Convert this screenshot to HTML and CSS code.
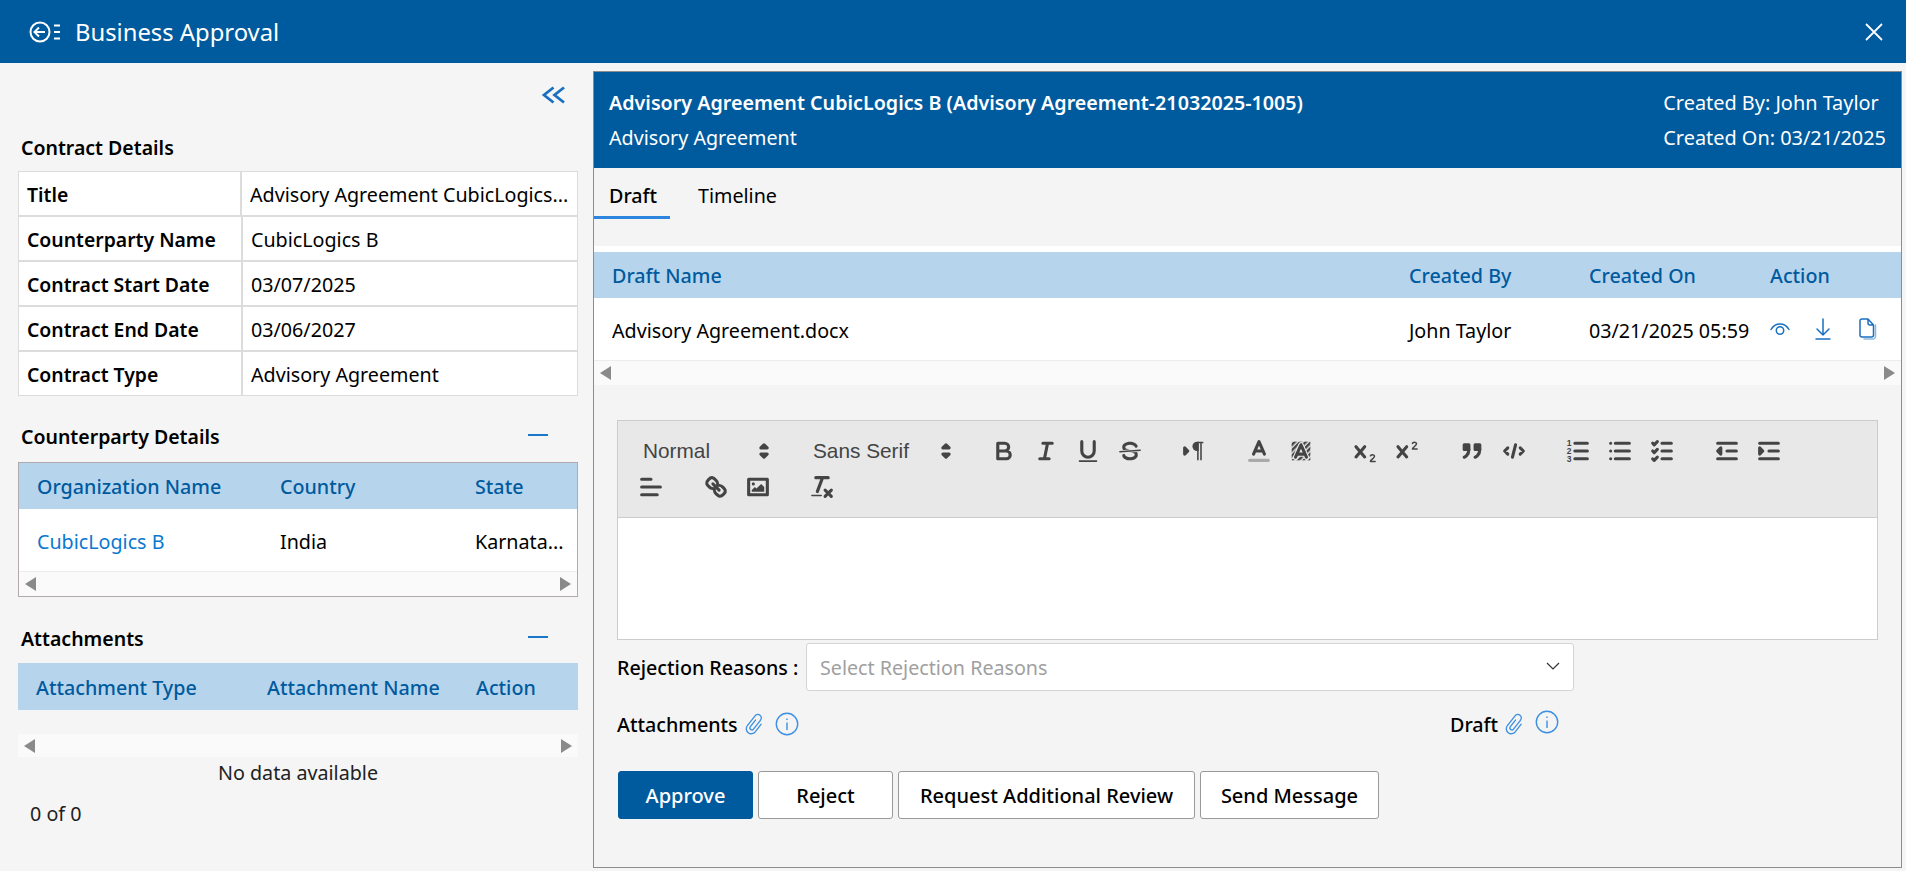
FILE: index.html
```html
<!DOCTYPE html>
<html lang="en">
	<head>
		<meta charset="utf-8">
		<title>Business Approval</title>
		<link rel="stylesheet" href="styles.css">
	</head>
	<body>
		<header class="topbar">
			<svg class="topbar-back" viewBox="0 0 32 24" width="32" height="24">
				<circle cx="11" cy="12" r="9.5"/>
				<path d="M16 12H6M10 7.5 5.5 12l4.5 4.500"/>
				<path d="M25 5.500h6M25 12h6M25 18.500h6"/>
			</svg>
			<h1 class="topbar-title">Business Approval</h1>
			<svg class="topbar-close" viewBox="0 0 18 18" width="18" height="18">
				<path d="M1 1l16 16M17 1 1 17"/>
			</svg>
		</header>

		<div class="page">
			<aside class="side">
				<div class="side-collapse">
					<svg class="icon-collapse" viewBox="0 0 26 18" width="26" height="18">
						<path d="M12.500 1.500 3 9l9.500 7.500M23 1.500 13.500 9l9.500 7.500"/>
					</svg>
				</div>

				<h2 class="side-title side-title-first">Contract Details</h2>
				<div class="details">
					<div class="details-row details-row-title">
						<div class="details-label">Title</div>
						<div class="details-value">Advisory Agreement CubicLogics...</div>
					</div>
					<div class="details-row">
						<div class="details-label">Counterparty Name</div>
						<div class="details-value">CubicLogics B</div>
					</div>
					<div class="details-row">
						<div class="details-label">Contract Start Date</div>
						<div class="details-value">03/07/2025</div>
					</div>
					<div class="details-row">
						<div class="details-label">Contract End Date</div>
						<div class="details-value">03/06/2027</div>
					</div>
					<div class="details-row">
						<div class="details-label">Contract Type</div>
						<div class="details-value">Advisory Agreement</div>
					</div>
				</div>

				<div class="side-head">
					<h2 class="side-title">Counterparty Details</h2>
					<span class="side-minus"></span>
				</div>
				<div class="grid grid-framed">
					<div class="grid-row grid-head cols-party">
						<div>Organization Name</div>
						<div>Country</div>
						<div>State</div>
					</div>
					<div class="grid-row grid-body cols-party">
						<div class="grid-link">CubicLogics B</div>
						<div>India</div>
						<div>Karnata...</div>
					</div>
					<div class="scroller"><span class="arrow-left"></span><span class="arrow-right"></span></div>
				</div>

				<div class="side-head side-head-attach">
					<h2 class="side-title">Attachments</h2>
					<span class="side-minus"></span>
				</div>
				<div class="grid">
					<div class="grid-row grid-head cols-attach">
						<div>Attachment Type</div>
						<div>Attachment Name</div>
						<div>Action</div>
					</div>
					<div class="grid-gap"></div>
					<div class="scroller scroller-flat"><span class="arrow-left"></span><span class="arrow-right"></span></div>
					<div class="grid-empty">No data available</div>
					<div class="grid-count">0 of 0</div>
				</div>
			</aside>

			<main class="panel">
				<section class="panel-head">
					<div>
						<div class="panel-title">Advisory Agreement CubicLogics B (Advisory Agreement-21032025-1005)</div>
						<div class="panel-sub">Advisory Agreement</div>
					</div>
					<div class="panel-meta">
						<div>Created By: John Taylor</div>
						<div>Created On: 03/21/2025</div>
					</div>
				</section>

				<nav class="tabs">
					<div class="tab tab-active">Draft</div>
					<div class="tab">Timeline</div>
				</nav>

				<div class="drafts">
					<div class="grid-row grid-head cols-draft">
						<div>Draft Name</div>
						<div>Created By</div>
						<div>Created On</div>
						<div>Action</div>
					</div>
					<div class="grid-row grid-body cols-draft">
						<div>Advisory Agreement.docx</div>
						<div>John Taylor</div>
						<div>03/21/2025 05:59</div>
						<div class="draft-actions">
							<svg class="icon-action" viewBox="0 0 20 16" width="20" height="16">
								<path d="M1 8.500C3 5 6.200 3 10 3s7 2 9 5.500"/>
								<circle cx="10" cy="9.500" r="3.700"/>
							</svg>
							<svg class="icon-action" viewBox="0 0 16 22" width="16" height="22">
								<path d="M8 1v16M2 11l6 6 6-6M1 21h14"/>
							</svg>
							<svg class="icon-action icon-copy" viewBox="0 0 18 22" width="18" height="22">
								<path class="icon-action-back" d="M16.500 7v11.500a2.500 2.500 0 0 1-2.500 2.500H5"/>
								<path d="M14.500 7v10a2 2 0 0 1-2 2H3a2 2 0 0 1-2-2V3a2 2 0 0 1 2-2h6zM9 1v4a2 2 0 0 0 2 2h3.500"/>
							</svg>
						</div>
					</div>
					<div class="scroller"><span class="arrow-left"></span><span class="arrow-right"></span></div>
				</div>

				<div class="editor">
					<div class="ql-toolbar">
						<div class="ql-format">
							<div class="ql-picker ql-picker-size"><span>Normal</span>
								<svg class="ql" viewBox="0 0 18 18"><polygon class="ql-solid" points="7 11 9 13 11 11 7 11"/><polygon class="ql-solid" points="7 7 9 5 11 7 7 7"/></svg>
							</div>
						</div>
						<div class="ql-format">
							<div class="ql-picker ql-picker-font"><span>Sans Serif</span>
								<svg class="ql" viewBox="0 0 18 18"><polygon class="ql-solid" points="7 11 9 13 11 11 7 11"/><polygon class="ql-solid" points="7 7 9 5 11 7 7 7"/></svg>
							</div>
						</div>
						<div class="ql-format">
							<span class="ql-btn"><svg class="ql" viewBox="0 0 18 18"><path d="M5 4h4.500a2.500 2.500 0 0 1 0 5H5zM5 9h5.500a2.500 2.500 0 0 1 0 5H5z"/></svg></span>
							<span class="ql-btn"><svg class="ql" viewBox="0 0 18 18"><path d="M7 4h6M5 14h6M8 14l2-10"/></svg></span>
							<span class="ql-btn"><svg class="ql" viewBox="0 0 18 18"><path d="M5 3v6a4 4 0 0 0 4 4 4 4 0 0 0 4-4V3"/><rect class="ql-fillonly" x="3" y="15" width="12" height="1" rx=".5"/></svg></span>
							<span class="ql-btn"><svg class="ql" viewBox="0 0 18 18"><path class="ql-thin" d="M15.500 8.500 2.500 9.500"/><path class="ql-fillonly" d="M9 8C6.500 7.800 6 7.500 6 6.500 6 5.800 7.300 5 9 5c1.600 0 2.800.7 3 1.300a1 1 0 0 0 1.900-.6C13.400 4.100 11.400 3 9 3 6.200 3 4 4.500 4 6.500c0 .7.200 1.300.5 1.800zM9 10c2.500.2 3 .5 3 1.500 0 .7-1.300 1.500-3 1.500-1.600 0-2.800-.7-3-1.300a1 1 0 1 0-1.900.6C4.600 13.900 6.600 15 9 15c2.800 0 5-1.500 5-3.500 0-.7-.2-1.300-.5-1.800z"/></svg></span>
						</div>
						<div class="ql-format">
							<span class="ql-btn"><svg class="ql" viewBox="0 0 18 18"><polygon class="ql-solid" points="3 11 5 9 3 7 3 11"/><path class="ql-fillonly" d="M11 3a3 3 0 0 0 0 6h1V3z"/><path class="ql-fillonly" d="M11 3h4v1h-1v11h-1V4h-1v11h-1z"/></svg></span>
						</div>
						<div class="ql-format">
							<span class="ql-btn"><svg class="ql" viewBox="0 0 18 18"><path class="ql-label" d="M3 15h12"/><path d="M5.500 11 9 3l3.500 8M11.600 9H6.400"/></svg></span>
							<span class="ql-btn"><svg class="ql" viewBox="0 0 18 18"><defs><pattern id="hatch" width="2.500" height="2.500" patternUnits="userSpaceOnUse" patternTransform="rotate(45)"><rect width=".6" height="1.800" fill="#555"/></pattern></defs><rect class="ql-hatch" x="3" y="3" width="12" height="12" fill="url(#hatch)"/><path class="ql-halo" d="M5.500 13 9 5l3.500 8M11.600 11H6.400"/><path d="M5.500 13 9 5l3.500 8M11.600 11H6.400"/></svg></span>
						</div>
						<div class="ql-format">
							<span class="ql-btn"><svg class="ql" viewBox="0 0 18 18"><path d="M3.200 6.200 8.800 12.800M8.800 6.200 3.200 12.800"/><path class="ql-thin" d="M12.500 12.100c.2-.9 2.600-1 2.600.3 0 1.300-2.600 2.300-2.600 3.300h3"/></svg></span>
							<span class="ql-btn"><svg class="ql" viewBox="0 0 18 18"><path d="M3.200 6.200 8.800 12.800M8.800 6.200 3.200 12.800"/><path class="ql-thin" d="M12.500 4.100c.2-.9 2.600-1 2.600.3 0 1.300-2.600 2.300-2.600 3.300h3"/></svg></span>
						</div>
						<div class="ql-format">
							<span class="ql-btn"><svg class="ql" viewBox="0 0 18 18"><rect class="ql-solid" x="4" y="5" width="3" height="3"/><rect class="ql-solid" x="11" y="5" width="3" height="3"/><path d="M7 8c0 4-3 5-3 5M14 8c0 4-3 5-3 5"/></svg></span>
							<span class="ql-btn"><svg class="ql" viewBox="0 0 18 18"><path d="M5 7 3 9l2 2M13 7l2 2-2 2M10 5 8 13"/></svg></span>
						</div>
						<div class="ql-format">
							<span class="ql-btn"><svg class="ql" viewBox="0 0 18 18"><path d="M7 4h8M7 9h8M7 14h8"/><text class="ql-num" x="3.300" y="5.700">1</text><text class="ql-num" x="3.300" y="10.800">2</text><text class="ql-num" x="3.300" y="15.900">3</text></svg></span>
							<span class="ql-btn"><svg class="ql" viewBox="0 0 18 18"><path d="M6 4h9M6 9h9M6 14h9M3 4h0M3 9h0M3 14h0"/></svg></span>
							<span class="ql-btn"><svg class="ql" viewBox="0 0 18 18"><path d="M9 4h6M9 9h6M9 14h6M3 4l1 1 2-2M3 9l1 1 2-2M3 14l1 1 2-2"/></svg></span>
						</div>
						<div class="ql-format">
							<span class="ql-btn"><svg class="ql" viewBox="0 0 18 18"><path d="M3 14h12M3 4h12M9 9h6"/><polygon class="ql-solid" points="5 7 5 11 3 9 5 7"/></svg></span>
							<span class="ql-btn"><svg class="ql" viewBox="0 0 18 18"><path d="M3 14h12M3 4h12M9 9h6"/><polygon class="ql-solid" points="3 7 3 11 5 9 3 7"/></svg></span>
						</div>
						<div class="ql-format">
							<span class="ql-btn"><svg class="ql" viewBox="0 0 18 18"><path d="M3 9h12M3 14h10M3 4h6"/></svg></span>
						</div>
						<div class="ql-format">
							<span class="ql-btn"><svg class="ql" viewBox="0 0 18 18"><path d="M7 7l4 4M8.900 4.600a3.500 3.500 0 0 1 .4 4.700 3.500 3.500 0 0 1-4.700-.4C3.200 7.500 2 6.400 4.200 4.200s3.300-1 4.700.4zM13.400 9.100a3.500 3.500 0 0 0-4.700-.4 3.500 3.500 0 0 0 .4 4.700c1.400 1.400 2.500 2.500 4.700.4s1-3.300-.4-4.700z"/></svg></span>
							<span class="ql-btn"><svg class="ql" viewBox="0 0 18 18"><rect x="3" y="4" width="12" height="10"/><circle class="ql-fillonly" cx="6" cy="7" r="1"/><polygon class="ql-fillonly" points="5 12 5 11 7 9 8 10 11 7 13 9 13 12 5 12"/></svg></span>
						</div>
						<div class="ql-format">
							<span class="ql-btn"><svg class="ql" viewBox="0 0 18 18"><path d="M5 3h8M6 12 9.350 3M11 11l4 4M15 11l-4 4"/><rect class="ql-fillonly" x="2" y="14" width="7" height="1" rx=".5"/></svg></span>
						</div>
					</div>
					<div class="ql-body"></div>
				</div>

				<div class="reject-row">
					<label class="field-label">Rejection Reasons :</label>
					<div class="select">
						<span>Select Rejection Reasons</span>
						<svg class="select-caret" viewBox="0 0 14 8" width="14" height="8"><path d="M1 1l6 6 6-6"/></svg>
					</div>
				</div>

				<div class="attach-row">
					<div class="attach-item">
						<span class="field-label">Attachments</span>
						<svg class="icon-clip" viewBox="0 0 20 24" width="20" height="24"><path d="M8 8v9a2 2 0 0 0 4 0V5.500a3.500 3.500 0 0 0-7 0V18a5 5 0 0 0 10 0V8" transform="rotate(38 10 12)"/></svg>
						<svg class="icon-info" viewBox="0 0 24 24" width="24" height="24"><circle cx="12" cy="12" r="10.700"/><path d="M12 10.500V18M12 6.500v1.500"/></svg>
					</div>
					<div class="attach-item">
						<span class="field-label">Draft</span>
						<svg class="icon-clip" viewBox="0 0 20 24" width="20" height="24"><path d="M8 8v9a2 2 0 0 0 4 0V5.500a3.500 3.500 0 0 0-7 0V18a5 5 0 0 0 10 0V8" transform="rotate(38 10 12)"/></svg>
						<svg class="icon-info icon-info-up" viewBox="0 0 24 24" width="24" height="24"><circle cx="12" cy="12" r="10.700"/><path d="M12 10.500V18M12 6.500v1.500"/></svg>
					</div>
				</div>

				<div class="actions">
					<button class="btn btn-primary">Approve</button>
					<button class="btn">Reject</button>
					<button class="btn">Request Additional Review</button>
					<button class="btn">Send Message</button>
				</div>
			</main>
		</div>
	</body>
</html>
```

FILE: styles.css
```css
body {
	margin: 0;
	height: 871px;
	overflow: hidden;
	background-color: #f5f5f5;
	color: #000;
	font-family: 'Noto Sans', 'Open Sans', sans-serif;
	font-size: 19.7px;
}

/* Top bar */

.topbar {
	height: 63px;
	display: flex;
	align-items: center;
	padding: 0 23px 0 29px;
	background-color: #005a9e;
	color: white;
}

.topbar-back {
	fill: none;
	stroke: white;
	stroke-width: 2;
}

.topbar-title {
	flex: 1;
	margin: 0 0 0 14px;
	font-size: 23.8px;
	font-weight: 400;
}

.topbar-close {
	fill: none;
	stroke: white;
	stroke-width: 1.8;
}

.page {
	display: flex;
}

/* Left column */

.side {
	width: 560px;
	flex: none;
	padding: 0 15px 0 18px;
}

.side-collapse {
	height: 71px;
	padding-top: 23px;
	box-sizing: border-box;
	display: flex;
	justify-content: flex-end;
	padding-right: 11px;
}

.icon-collapse {
	fill: none;
	stroke: #1a70c0;
	stroke-width: 2.8;
}

.side-title {
	margin: 0;
	font-size: 19.5px;
	line-height: 24px;
	font-weight: 600;
}

.side-title-first {
	margin: 2px 0 0 3px;
	height: 35px;
}

.side-head {
	display: flex;
	align-items: center;
	justify-content: space-between;
	height: 24px;
	margin: 29px 0 13px 3px;
	padding-right: 30px;
}

.side-head-attach {
	margin-top: 30px;
	margin-bottom: 12px;
}

.side-minus {
	width: 20px;
	height: 2px;
	background-color: #1a78c8;
	margin-top: -4px;
}

.details-row {
	display: grid;
	grid-template-columns: 223px 1fr;
	height: 45px;
	box-sizing: border-box;
	border: 1px solid #dcdcdc;
	background-color: white;
	line-height: 45px;
}

.details-row-title {
	grid-template-columns: 222px 1fr;
}

.details-label {
	padding-left: 8px;
	height: 43px;
	font-weight: 600;
	font-size: 19.4px;
	border-right: 1px solid #dcdcdc;
	white-space: nowrap;
}

.details-value {
	padding-left: 8px;
	height: 43px;
	border-left: 1px solid #dcdcdc;
	white-space: nowrap;
}

/* Data grids */

.grid-framed {
	border: 1px solid #b0a9b0;
}

.grid-row {
	display: grid;
	white-space: nowrap;
}

.grid-head {
	height: 46px;
	line-height: 48px;
	background-color: #b7d4ed;
	color: #005a9e;
	font-weight: 500;
}

.grid-body {
	height: 63px;
	line-height: 65px;
	background-color: white;
	border-bottom: 1px solid #ececec;
	box-sizing: border-box;
}

.grid-link {
	color: #0a78d0;
}

.cols-party {
	padding-left: 18px;
	grid-template-columns: 243px 195px 1fr;
}

.cols-attach {
	padding-left: 18px;
	height: 47px;
	line-height: 50px;
	grid-template-columns: 231px 209px 1fr;
}

.cols-draft {
	padding-left: 18px;
	grid-template-columns: 797px 180px 181px 1fr;
}

.scroller {
	height: 24px;
	display: flex;
	align-items: center;
	justify-content: space-between;
	padding: 0 6px;
	background-color: #fafafa;
}

.scroller-flat {
	height: 23px;
}

.arrow-left,
.arrow-right {
	width: 0;
	height: 0;
	border-top: 7px solid transparent;
	border-bottom: 7px solid transparent;
}

.arrow-left {
	border-right: 11px solid #8a8a8a;
}

.arrow-right {
	border-left: 11px solid #8a8a8a;
}

.grid-gap {
	height: 24px;
}

.grid-empty {
	height: 32px;
	line-height: 32px;
	text-align: center;
	color: #222;
}

.grid-count {
	margin-top: 9px;
	padding-left: 12px;
	line-height: 32px;
	color: #222;
}

/* Right panel */

.panel {
	width: 1307px;
	height: 795px;
	flex: none;
	margin: 8px 0 0 0;
	border: 1px solid #8c8c8c;
	background-color: #f4f4f4;
}

.panel-head {
	height: 96px;
	box-sizing: border-box;
	display: flex;
	justify-content: space-between;
	padding: 13px 15px 0 15px;
	background-color: #005a9e;
	color: white;
	line-height: 35px;
}

.panel-title {
	font-weight: 600;
}

.panel-meta {
	font-size: 19.9px;
}

.tabs {
	height: 78px;
	display: flex;
	box-sizing: border-box;
}

.tab {
	height: 51px;
	box-sizing: border-box;
	padding: 11px 15px 0;
	line-height: 34px;
}

.tab-active {
	width: 76px;
	font-weight: 500;
	border-bottom: 3px solid #2d86de;
}

.tab-active + .tab {
	padding-left: 28px;
}

.drafts {
	padding-top: 6px;
	background-color: white;
}

.draft-actions {
	display: flex;
	align-items: center;
	margin-top: -4px;
	gap: 25px;
}

.icon-action {
	fill: none;
	stroke: #1a70c0;
	stroke-width: 1.500;
	stroke-linecap: round;
	stroke-linejoin: round;
}

.icon-copy {
	margin-left: 3px;
}

.icon-action-back {
	stroke: #8fb9e0;
}

/* Rich text editor */

.editor {
	width: 1261px;
	margin: 35px 0 0 23px;
	box-sizing: border-box;
	border: 1px solid #ccc;
	background-color: white;
}

.ql-toolbar {
	display: flex;
	flex-wrap: wrap;
	padding: 12px 40px 12px 12px;
	background-color: #e8e8e8;
	border-bottom: 1px solid #ccc;
}

.ql-format {
	display: flex;
	margin-right: 22.500px;
}

.ql-btn {
	width: 42px;
	height: 36px;
	display: flex;
	align-items: center;
	justify-content: center;
}

.ql {
	width: 28px;
	height: 28px;
	fill: none;
	stroke: #444;
	stroke-width: 2;
	stroke-linecap: round;
	stroke-linejoin: round;
}

.ql .ql-thin {
	stroke-width: 1;
}

.ql .ql-solid {
	fill: #444;
}

.ql .ql-fillonly {
	fill: #444;
	stroke: none;
}

.ql .ql-label {
	stroke: #aaa;
}

.ql .ql-hatch {
	stroke: none;
}

.ql .ql-halo {
	stroke: #e8e8e8;
	stroke-width: 3.500;
}

.ql .ql-num {
	fill: #444;
	stroke: none;
	font-family: 'Liberation Sans', sans-serif;
	font-size: 5.5px;
	font-weight: 700;
	text-anchor: middle;
}

.ql-picker {
	height: 36px;
	display: flex;
	align-items: center;
	justify-content: space-between;
	padding-left: 13px;
	box-sizing: border-box;
	color: #444;
	font-family: 'Liberation Sans', sans-serif;
	font-size: 20.800px;
}

.ql-picker-size {
	width: 147.500px;
}

.ql-picker-font {
	width: 160px;
}

.ql-body {
	height: 121px;
}

/* Form rows */

.field-label {
	font-weight: 500;
}

.reject-row {
	display: flex;
	align-items: center;
	margin: 3px 0 0 23px;
}

.reject-row .field-label {
	width: 189px;
	white-space: nowrap;
}

.select {
	width: 768px;
	height: 48px;
	box-sizing: border-box;
	display: flex;
	align-items: center;
	justify-content: space-between;
	padding: 0 13px 0 13px;
	background-color: white;
	border: 1px solid #d4d4d4;
	border-radius: 3px;
	color: #a0a0a0;
}

.select-caret {
	fill: none;
	stroke: #333;
	stroke-width: 1.200;
	margin-top: -3px;
}

.attach-row {
	display: grid;
	grid-template-columns: 833px 1fr;
	margin: 16px 0 0 23px;
	height: 34px;
}

.attach-item {
	display: flex;
	align-items: center;
}

.icon-clip {
	fill: none;
	stroke: #3d8fe0;
	stroke-width: 1.300;
	margin-left: 7px;
}

.icon-info {
	fill: none;
	stroke: #3d8fe0;
	stroke-width: 1.400;
	margin-left: 10px;
}

.icon-info-up {
	margin-top: -4px;
}

.actions {
	display: grid;
	grid-template-columns: 135px 135px 297px 179px;
	gap: 5px;
	margin: 30px 0 0 24px;
}

.btn {
	height: 48px;
	padding: 0;
	background-color: white;
	border: 1px solid #999;
	border-radius: 3px;
	color: #000;
	font-family: inherit;
	font-size: 20px;
	font-weight: 500;
}

.btn-primary {
	background-color: #005a9e;
	border-color: #005a9e;
	color: white;
}
```
